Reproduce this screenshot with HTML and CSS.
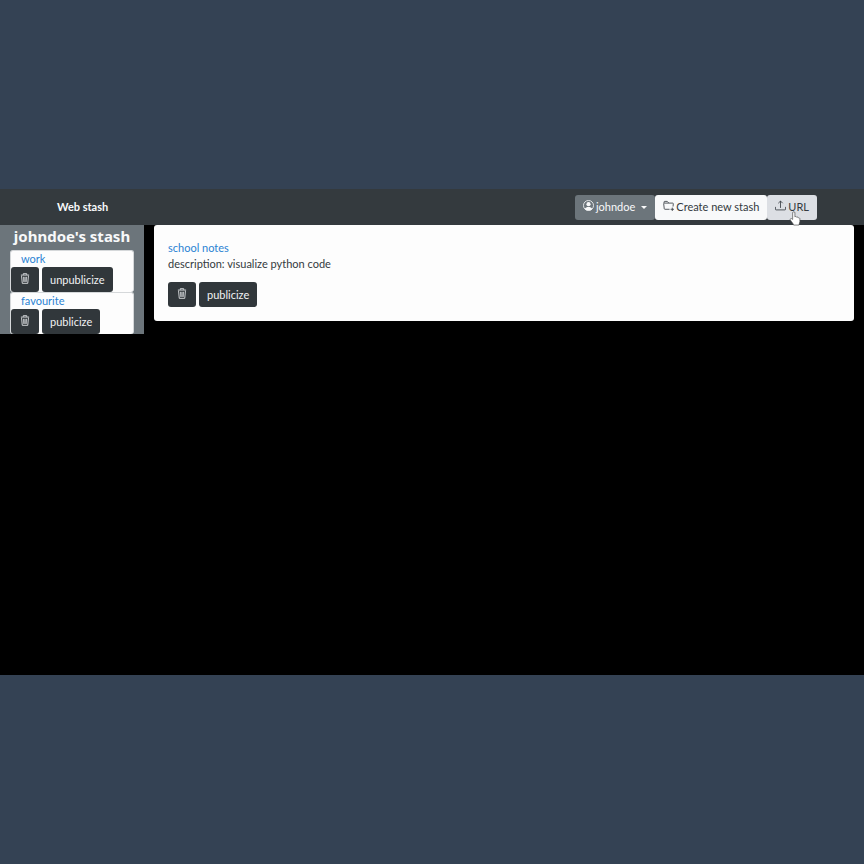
FILE: index.html
```html
<!DOCTYPE html>
<html lang="en">
<head>
<meta charset="utf-8">
<title>Web stash</title>
<link rel="stylesheet" href="styles.css">
</head>
<body>
<svg class="symbols">
  <symbol id="trash" viewBox="0 0 16 16">
    <path d="M2 3h12M5.500 2.500V1h5v1.500M3 4l1 11h8l1-11M6 5.500l.3 7.500M8 5.500V13M10 5.500 9.700 13" fill="none" stroke="currentColor" stroke-width="1.200"/>
  </symbol>
</svg>
<div class="screen">
  <nav class="navbar">
    <a class="brand" href="#">Web stash</a>
    <div class="nav-actions">
      <button class="btn btn-user" type="button">
        <svg class="icon raised" viewBox="0 0 16 16"><circle cx="8" cy="8" r="7.300" fill="none" stroke="currentColor" stroke-width="1.200"/><circle cx="8" cy="6" r="3" fill="currentColor"/><path d="M2.500 13c1.200-2.400 3-3 5.500-3s4.300.6 5.500 3A7 7 0 0 1 8 15.200 7 7 0 0 1 2.500 13z" fill="currentColor"/></svg>
        <span>johndoe</span><span class="caret"></span>
      </button>
      <button class="btn btn-light" type="button">
        <svg class="icon raised" viewBox="0 0 16 16"><path d="M9.500 13.500H2.800a1 1 0 0 1-1-.9L1 5.500a1 1 0 0 1 1-1h12a1 1 0 0 1 1 1l-.4 4M1.500 4.500V3a1 1 0 0 1 1-1h3.700l2 2.200M13.500 11v5M11 13.500h5" fill="none" stroke="currentColor" stroke-width="1.200"/></svg>
        <span>Create new stash</span>
      </button>
      <button class="btn btn-url" type="button">
        <svg class="icon raised" viewBox="0 0 16 16"><path d="M.6 10v3.400a1 1 0 0 0 1 1h12.800a1 1 0 0 0 1-1V10M8 11.500V1.500M4.800 4.700 8 1.500l3.200 3.200" fill="none" stroke="currentColor" stroke-width="1.200"/></svg>
        <span>URL</span>
        <svg class="pointer" viewBox="0 0 12 16" aria-hidden="true"><path d="M3.500 9V2a1.200 1.200 0 0 1 2.400 0v4.300c.6-.6 1.600-.4 1.900.3.700-.4 1.500 0 1.700.7.900-.3 1.700.2 1.700 1.200v2.800c0 1.300-.8 2-1 3.700H4.500C4 13 2.200 11.500 1 9.600c-.7-1.200.8-2 1.600-1.300z" fill="#fff" stroke="#444" stroke-width=".7"/></svg>
      </button>
    </div>
  </nav>
  <div class="content">
    <aside class="sidebar">
      <h1>johndoe's stash</h1>
      <div class="stash">
        <a href="#">work</a>
        <div class="actions">
          <button class="btn btn-dark" type="button" aria-label="Delete work"><svg class="icon raised" viewBox="0 0 16 16"><use href="#trash"/></svg></button>
          <button class="btn btn-dark" type="button">unpublicize</button>
        </div>
      </div>
      <div class="stash">
        <a href="#">favourite</a>
        <div class="actions">
          <button class="btn btn-dark" type="button" aria-label="Delete favourite"><svg class="icon raised" viewBox="0 0 16 16"><use href="#trash"/></svg></button>
          <button class="btn btn-dark" type="button">publicize</button>
        </div>
      </div>
    </aside>
    <main>
      <article class="card">
        <a href="#">school notes</a>
        <p>description: visualize python code</p>
        <div class="actions">
          <button class="btn btn-dark" type="button" aria-label="Delete school notes"><svg class="icon raised" viewBox="0 0 16 16"><use href="#trash"/></svg></button>
          <button class="btn btn-dark" type="button">publicize</button>
        </div>
      </article>
    </main>
  </div>
</div>
</body>
</html>
```
FILE: styles.css
```css
* { box-sizing: border-box; }

body {
  display: flex;
  flex-direction: column;
  justify-content: center;
  min-height: 100vh;
  margin: 0;
  background: #344254;
  color: #343a40;
  font: 11px/16px Lato, "Noto Sans", sans-serif;
}

.symbols { display: none; }

.screen {
  aspect-ratio: 16 / 9;
  background: #000;
}

.navbar {
  display: flex;
  align-items: center;
  justify-content: space-between;
  height: 36px;
  padding: 0 47px 0 57px;
  background: #343a3e;
}

.brand {
  color: #f8f9fa;
  font-weight: 700;
}

a {
  color: #2b83d3;
  text-decoration: none;
}

.nav-actions,
.actions {
  display: flex;
}

.actions { gap: 3px; }

.btn {
  display: flex;
  align-items: center;
  gap: 2px;
  height: 25px;
  padding: 0 8px;
  border: 0;
  border-radius: 3px;
  color: #343a40;
  font: inherit;
  white-space: nowrap;
}

.btn-user { background: #6c757b; color: #f8f9fa; }
.btn-light { background: #f8f9fa; }
.btn-url { position: relative; background: #dcdfe4; }
.btn-dark { background: #31373b; color: #f1f3f5; }

.icon {
  width: 11px;
  height: 11px;
}

.btn-dark .icon { width: 12px; }

.raised { margin-bottom: 3px; }

.caret {
  margin-left: 4px;
  border: 3px solid transparent;
  border-top-color: currentColor;
  border-bottom: 0;
}

.pointer {
  position: absolute;
  top: 16px;
  left: 22px;
  width: 12px;
  height: 15px;
}

.content {
  display: grid;
  grid-template-columns: 1fr 5fr;
  align-items: start;
}

.sidebar {
  padding: 0 10px;
  background: #6c757b;
}

h1 {
  margin: 0;
  padding-bottom: 3px;
  color: #f8f9fa;
  font-family: "Noto Sans", sans-serif;
  font-size: 15px;
  line-height: 22px;
  text-align: center;
  white-space: nowrap;
}

.stash {
  border: 1px solid #d5d8da;
  border-bottom: 0;
  border-radius: 3px;
  background: #fdfdfd;
}

.stash a {
  display: block;
  padding-left: 10px;
}

main { padding: 0 10px; }

.card {
  padding: 15px 14px 14px;
  border-radius: 3px;
  background: #fdfdfd;
}

.card a { display: block; }

.card p { margin: 0 0 10px; }
```
